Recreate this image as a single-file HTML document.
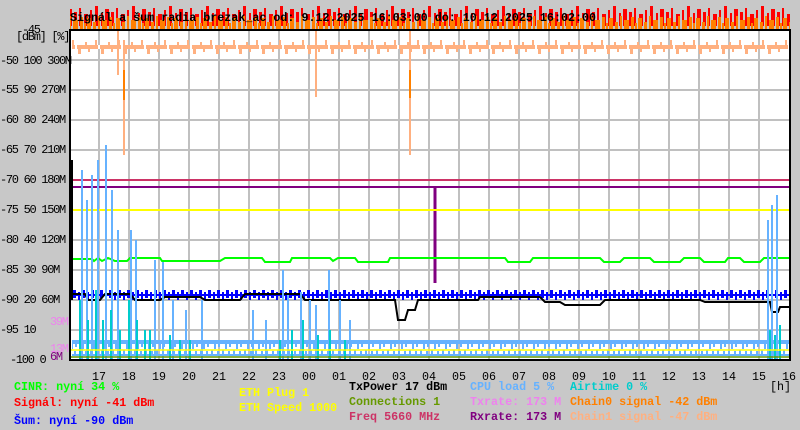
<!DOCTYPE html>
<html><head><meta charset="utf-8"><style>
body{margin:0;width:800px;height:430px;background:#c8c8c8;overflow:hidden;position:relative;font-family:"Liberation Mono",monospace;font-size:11.7px;}
.t{position:absolute;white-space:pre;line-height:12px;}
.a{position:absolute;white-space:pre;line-height:12px;font-size:12px;letter-spacing:-1.3px;}
.h{position:absolute;top:371px;width:20px;text-align:center;font-size:11.7px;line-height:12px;}
.b{font-weight:bold;}
</style></head><body>
<svg width="800" height="430" style="position:absolute;left:0;top:0">
<defs>
<pattern id="red" width="37" height="30" patternUnits="userSpaceOnUse">
<rect x="0" y="12" width="3" height="14" fill="#f00"/><rect x="5" y="8" width="2" height="18" fill="#f00"/><rect x="10" y="14" width="4" height="12" fill="#f00"/><rect x="16" y="10" width="2" height="16" fill="#f00"/><rect x="21" y="6" width="3" height="20" fill="#f00"/><rect x="27" y="13" width="2" height="13" fill="#f00"/><rect x="31" y="9" width="4" height="17" fill="#f00"/>
</pattern>
<pattern id="org" width="29" height="30" patternUnits="userSpaceOnUse">
<rect x="0" y="18" width="4" height="12" fill="#ff8000"/><rect x="6" y="22" width="3" height="8" fill="#ff8000"/><rect x="11" y="16" width="2" height="14" fill="#ff8000"/><rect x="15" y="20" width="5" height="10" fill="#ff8000"/><rect x="22" y="17" width="3" height="13" fill="#ff8000"/><rect x="26" y="23" width="2" height="7" fill="#ff8000"/>
</pattern>
<pattern id="sal" width="23" height="20" patternUnits="userSpaceOnUse">
<rect x="0" y="5" width="23" height="4" fill="#ffb080"/><rect x="3" y="0" width="2" height="5" fill="#ffb080"/><rect x="9" y="9" width="3" height="5" fill="#ffb080"/><rect x="16" y="2" width="2" height="3" fill="#ffb080"/><rect x="19" y="9" width="2" height="3" fill="#ffb080"/><rect x="6" y="5" width="2" height="4" fill="#fff"/>
</pattern>
<pattern id="lb" width="11" height="14" patternUnits="userSpaceOnUse">
<rect x="0" y="4" width="11" height="4" fill="#66b2ff"/><rect x="2" y="0" width="2" height="4" fill="#66b2ff"/><rect x="5" y="8" width="2" height="5" fill="#66b2ff"/><rect x="8" y="1" width="2" height="3" fill="#66b2ff"/><rect x="9" y="8" width="2" height="3" fill="#66b2ff"/>
</pattern>
<pattern id="bl" width="9" height="10" patternUnits="userSpaceOnUse">
<rect x="0" y="4" width="9" height="2" fill="#00f"/><rect x="1" y="0" width="3" height="8" fill="#00f"/><rect x="6" y="2" width="2" height="8" fill="#00f"/>
</pattern>
</defs>
<rect x="70" y="3" width="720" height="24" fill="url(#red)"/>
<rect x="70" y="0" width="720" height="30" fill="url(#org)"/>
<rect x="70" y="30" width="720" height="330" fill="#fff"/>
<g stroke="#c0c0c0" stroke-width="2">
<path d="M70 60H790M70 90H790M70 120H790M70 150H790M70 180H790M70 210H790M70 240H790M70 270H790M70 300H790M70 330H790"/>
<path d="M99 30V360M129 30V360M159 30V360M189 30V360M219 30V360M249 30V360M279 30V360M309 30V360M339 30V360M369 30V360M399 30V360M429 30V360M459 30V360M489 30V360M519 30V360M549 30V360M579 30V360M609 30V360M639 30V360M669 30V360M699 30V360M729 30V360M759 30V360"/>
</g>
<rect x="72" y="36" width="716" height="18" fill="url(#sal)"/>
<rect x="72" y="31" width="716" height="6" fill="url(#org)" opacity=".8"/>
<path d="M118 30V75M124 40V155M316 30V97M410 30V155" stroke="#ffb080" stroke-width="2"/>
<path d="M124 70V100M410 70V98" stroke="#ff8000" stroke-width="2"/>
<path d="M70 180H790" stroke="#cc3366" stroke-width="2"/>
<path d="M70 187H790" stroke="#800080" stroke-width="2"/>
<path d="M435 187V283" stroke="#800080" stroke-width="3"/>
<path d="M70 210H790" stroke="#ff0" stroke-width="2"/>
<polyline fill="none" stroke="#0f0" stroke-width="2" points="72,259 92,259 94,261 98,258 102,261 108,258 115,261 127,261 130,258 160,258 162,261 220,261 225,258 262,258 265,262 290,262 292,258 330,258 333,261 338,258 355,258 358,262 388,262 390,258 505,258 508,262 530,262 533,258 600,258 604,262 620,262 624,258 650,258 654,262 680,262 684,258 700,258 704,262 725,262 728,258 740,258 744,262 760,262 764,258 790,258"/>
<rect x="72" y="290" width="718" height="10" fill="url(#bl)"/>
<polyline fill="none" stroke="#000" stroke-width="2" points="72,294 85,294 88,300 100,300 105,294 130,294 135,300 160,300 165,297 200,297 205,300 240,300 245,294 300,294 305,300 395,300 398,320 405,320 408,310 415,310 418,300 430,300 440,300 478,300 480,297 540,297 545,302 560,302 565,305 600,305 605,300 700,300 705,302 770,302 772,312 778,312 780,307 790,307"/>
<path d="M72 160V300" stroke="#000" stroke-width="2"/>
<rect x="72" y="340" width="718" height="16" fill="url(#lb)"/>
<g stroke="#66b2ff" stroke-width="2" fill="none">
<path d="M82 360V170M87 360V200M92 360V175M98 360V160M106 360V145M112 360V190M118 360V230M131 360V230M136 360V240M155 360V260M163 360V262M173 360V300M186 360V310M202 360V300M253 360V310M266 360V320M283 360V270M288 360V295M301 360V292M310 360V300M316 360V305M329 360V270M340 360V300M350 360V320M768 360V220M772 360V205M777 360V195"/>
</g>
<g stroke="#00cccc" stroke-width="2">
<path d="M80 360V300M88 360V320M96 360V290M103 360V320M111 360V310M120 360V330M129 360V300M137 360V320M145 360V330M150 360V330M170 360V335M180 360V340M190 360V340M280 360V340M292 360V330M303 360V320M318 360V335M330 360V330M345 360V340M770 360V330M775 360V335M780 360V325"/>
</g>
<path d="M70 350H790" stroke="#ff0" stroke-width="1.5"/>
<path d="M70 357H790" stroke="#669900" stroke-width="1.5"/>
<rect x="70" y="30" width="720" height="330" fill="none" stroke="#000" stroke-width="2"/>
</svg>
<div class="t b" style="left:70px;top:12px;color:#000">Signál a šum radia brezak_ac od: 9.12.2025 16:03:00 do: 10.12.2025 16:02:00</div>
<div class="a" style="left:22px;top:24px">-45</div>
<div class="a" style="left:16px;top:31px">[dBm] [%]</div>
<div class="a" style="left:0px;top:55px">-50 100 300M</div>
<div class="a" style="left:0px;top:84px">-55 90 270M</div>
<div class="a" style="left:0px;top:114px">-60 80 240M</div>
<div class="a" style="left:0px;top:144px">-65 70 210M</div>
<div class="a" style="left:0px;top:174px">-70 60 180M</div>
<div class="a" style="left:0px;top:204px">-75 50 150M</div>
<div class="a" style="left:0px;top:234px">-80 40 120M</div>
<div class="a" style="left:0px;top:264px">-85 30 90M</div>
<div class="a" style="left:0px;top:294px">-90 20 60M</div>
<div class="a" style="left:0px;top:324px">-95 10</div>
<div class="a" style="left:50px;top:316px;color:#ee82ee">39M</div>
<div class="a" style="left:50px;top:343px;color:#ee82ee">13M</div>
<div class="a" style="left:10px;top:354px">-100 0</div>
<div class="a" style="left:50px;top:351px;color:#800080">6M</div>
<div class="h" style="left:89px">17</div><div class="h" style="left:119px">18</div><div class="h" style="left:149px">19</div><div class="h" style="left:179px">20</div><div class="h" style="left:209px">21</div><div class="h" style="left:239px">22</div><div class="h" style="left:269px">23</div><div class="h" style="left:299px">00</div><div class="h" style="left:329px">01</div><div class="h" style="left:359px">02</div><div class="h" style="left:389px">03</div><div class="h" style="left:419px">04</div><div class="h" style="left:449px">05</div><div class="h" style="left:479px">06</div><div class="h" style="left:509px">07</div><div class="h" style="left:539px">08</div><div class="h" style="left:569px">09</div><div class="h" style="left:599px">10</div><div class="h" style="left:629px">11</div><div class="h" style="left:659px">12</div><div class="h" style="left:689px">13</div><div class="h" style="left:719px">14</div><div class="h" style="left:749px">15</div><div class="h" style="left:779px">16</div>
<div class="t" style="left:770px;top:381px">[h]</div>
<div class="t b" style="left:14px;top:381px;color:#0f0">CINR: nyní 34 %</div>
<div class="t b" style="left:14px;top:397px;color:#f00">Signál: nyní -41 dBm</div>
<div class="t b" style="left:14px;top:415px;color:#00f">Šum: nyní -90 dBm</div>
<div class="t b" style="left:239px;top:387px;color:#ff0">ETH Plug 1</div>
<div class="t b" style="left:239px;top:402px;color:#ff0">ETH Speed 1000</div>
<div class="t b" style="left:349px;top:381px;color:#000">TxPower 17 dBm</div>
<div class="t b" style="left:349px;top:396px;color:#669900">Connections 1</div>
<div class="t b" style="left:349px;top:411px;color:#cc3366">Freq 5660 MHz</div>
<div class="t b" style="left:470px;top:381px;color:#66b2ff">CPU load 5 %</div>
<div class="t b" style="left:470px;top:396px;color:#ee82ee">Txrate: 173 M</div>
<div class="t b" style="left:470px;top:411px;color:#800080">Rxrate: 173 M</div>
<div class="t b" style="left:570px;top:381px;color:#00cccc">Airtime 0 %</div>
<div class="t b" style="left:570px;top:396px;color:#ff8000">Chain0 signal -42 dBm</div>
<div class="t b" style="left:570px;top:411px;color:#ffb080">Chain1 signal -47 dBm</div>
</body></html>
